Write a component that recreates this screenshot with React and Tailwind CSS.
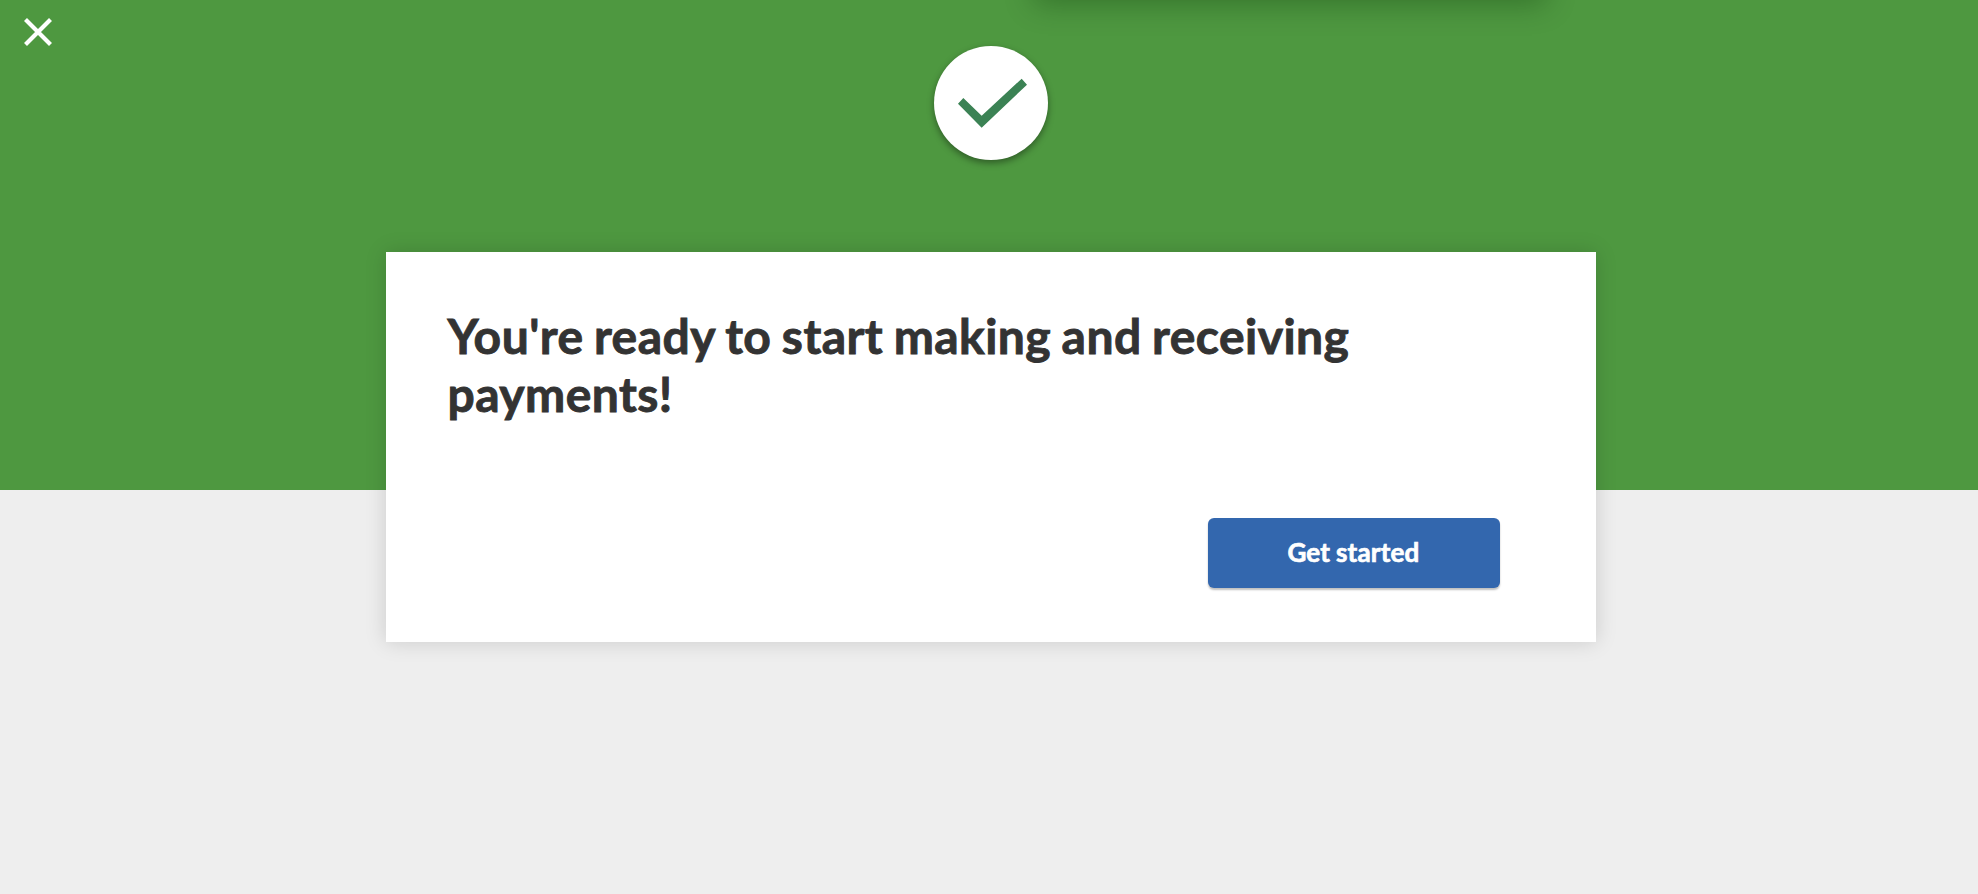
function CloseIcon() {
  return (
    <svg viewBox="0 0 28 28" className="h-7 w-7" fill="none" stroke="#ffffff" strokeWidth="4.2">
      <path d="M1.5 1.5 26.5 26.5M26.5 1.5 1.5 26.5" />
    </svg>
  );
}

function SuccessBadge() {
  return (
    <div className="h-[114px] w-[114px] rounded-full bg-white shadow-[0_3px_7px_rgba(0,0,0,0.4)]">
      <svg viewBox="0 0 342 342" className="h-full w-full" fill="#3b8254">
        <path d="M72 173 88 156 143 209 263 98 279 116 143 245Z" />
      </svg>
    </div>
  );
}

function ReadyCard({ title, action }) {
  return (
    <section className="flex h-[390px] w-[1210px] flex-col justify-between bg-white pt-[55px] pr-24 pb-[54px] pl-[61.5px] shadow-[0_0_20px_rgba(0,0,0,0.15)]">
      <h1 className="w-[960px] text-[48px] leading-[58px] font-bold tracking-[0.44px] text-[#333333] [-webkit-text-stroke:0.9px_#333333] [word-spacing:-1.6px]">
        {title}
      </h1>
      <button
        type="button"
        className="h-[70px] w-[292px] self-end rounded-md bg-[#3367ae] pr-px pb-0.5 text-[26px] font-bold tracking-[0.2px] text-white shadow-[0_2px_2px_rgba(0,0,0,0.25)] [-webkit-text-stroke:0.7px_#ffffff] [word-spacing:-0.8px]"
      >
        {action}
      </button>
    </section>
  );
}

function App() {
  return (
    <div className="relative h-[894px] overflow-hidden bg-[#eeeeee] font-['Lato',sans-serif]">
      {/* Shadow of the panel sitting just above the page */}
      <div className="absolute -top-24 left-[1034px] h-24 w-[512px] shadow-[0_4px_28px_rgba(0,40,0,0.32)]" />

      <header className="h-[490px] bg-[#4e9840]">
        <button type="button" aria-label="Close" className="ml-6 block pt-[18px]">
          <CloseIcon />
        </button>
      </header>

      <main className="relative -mt-[444px] ml-[386px] flex w-[1210px] flex-col items-center gap-[92px]">
        <SuccessBadge />
        <ReadyCard title="You're ready to start making and receiving payments!" action="Get started" />
      </main>
    </div>
  );
}

export default App;
